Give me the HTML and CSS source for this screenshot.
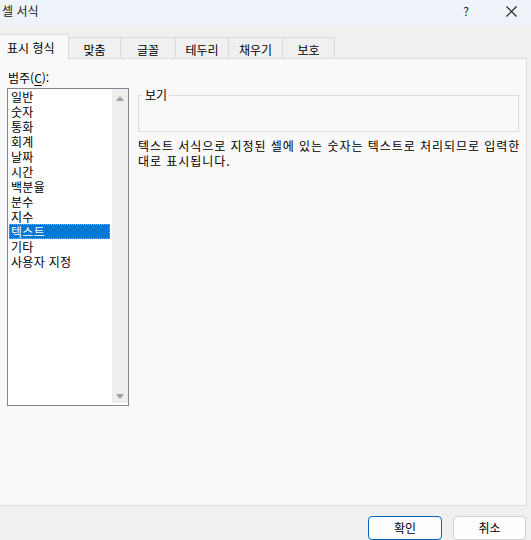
FILE: index.html
```html
<!DOCTYPE html>
<html lang="ko">
<head>
<meta charset="utf-8">
<title>셀 서식</title>
<link rel="stylesheet" href="styles.css">
</head>
<body>
<div class="dialog">
  <div class="titlebar">
    <span class="title">셀 서식</span>
    <span class="help">?</span>
    <span class="close"><svg width="11" height="11" viewBox="0 0 11 11"><path d="M0.5 0.5 L10.5 10.5 M10.5 0.5 L0.5 10.5" stroke="#1a1a1a" stroke-width="1.1" fill="none"/></svg></span>
  </div>
  <div class="tabs">
    <div class="tab active">표시 형식</div>
    <div class="tab">맞춤</div>
    <div class="tab">글꼴</div>
    <div class="tab">테두리</div>
    <div class="tab">채우기</div>
    <div class="tab">보호</div>
  </div>
  <div class="panel">
    <div class="left">
      <div class="label">범주(<u>C</u>):</div>
      <div class="listbox">
        <ul class="items">
          <li>일반</li>
          <li>숫자</li>
          <li>통화</li>
          <li>회계</li>
          <li>날짜</li>
          <li>시간</li>
          <li>백분율</li>
          <li>분수</li>
          <li>지수</li>
          <li class="selected">텍스트</li>
          <li>기타</li>
          <li>사용자 지정</li>
        </ul>
        <div class="scrollbar">
          <span class="arrow up"></span>
          <span class="arrow down"></span>
        </div>
      </div>
    </div>
    <div class="right">
      <div class="group"><span class="legend">보기</span></div>
      <p class="desc">텍스트 서식으로 지정된 셀에 있는 숫자는 텍스트로 처리되므로 입력한<br>대로 표시됩니다.</p>
    </div>
  </div>
  <div class="footer">
    <button class="btn default">확인</button>
    <button class="btn">취소</button>
  </div>
</div>
</body>
</html>
```

FILE: styles.css
```css
html, body {
  margin: 0;
  padding: 0;
}
body {
  width: 531px;
  height: 540px;
  overflow: hidden;
  background: #f0f0f0;
  font-family: "Noto Sans CJK KR", "Noto Sans", sans-serif;
  font-size: 12px;
  color: #000;
}
.dialog {
  display: flex;
  flex-direction: column;
  height: 540px;
}
.titlebar {
  height: 25px;
  background: #eef2f9;
  display: flex;
  align-items: center;
  padding-left: 2px;
}
.title {
  flex: 1;
  line-height: 22px;
  height: 25px;
  color: #1a1a1a;
}
.help {
  line-height: 22px;
  height: 25px;
  margin-right: 37px;
  color: #1a1a1a;
}
.close {
  display: flex;
  margin-right: 14px;
  margin-top: -3px;
}
.tabs {
  margin-top: 9px;
  height: 24px;
  display: grid;
  grid-template-columns: 69px 52px 55px 53px 54px 52px;
  align-items: end;
  position: relative;
  z-index: 1;
}
.tab {
  height: 21px;
  box-sizing: border-box;
  border: 1px solid #dadada;
  border-bottom: none;
  border-left: none;
  background: #f0f0f0;
  text-align: center;
  line-height: 21px;
  padding-top: 1px;
}
.tab.active {
  height: 25px;
  margin-bottom: -1px;
  background: #f9f9f9;
  border-left: none;
  line-height: 22px;
  padding-top: 2px;
  text-align: left;
  padding-left: 7px;
}
.panel {
  height: 448px;
  width: 527px;
  box-sizing: border-box;
  border: 1px solid #dcdcdc;
  border-left: none;
  background: #f9f9f9;
  display: flex;
  gap: 9px;
  padding-left: 7px;
}
.left {
  width: 122px;
  display: flex;
  flex-direction: column;
}
.label {
  margin-top: 11px;
  padding-left: 1px;
  line-height: 16px;
  height: 18px;
}
.label u {
  text-underline-offset: 2px;
}
.listbox {
  height: 318px;
  box-sizing: border-box;
  border: 1px solid #83848c;
  background: #fff;
  display: flex;
}
.items {
  list-style: none;
  margin: 0;
  padding: 0;
  width: 103px;
}
.items li {
  height: 15px;
  line-height: 15px;
  margin: 0 1px;
  padding-left: 2px;
  white-space: nowrap;
  letter-spacing: 0.3px;
}
.items li.selected {
  background: #0078d7;
  color: #fff;
  outline: 1px dotted #f09a3a;
  outline-offset: -1px;
}
.scrollbar {
  width: 16px;
  margin-left: 1px;
  margin-bottom: 2px;
  background: #eeeeee;
  display: flex;
  flex-direction: column;
  justify-content: space-between;
  align-items: center;
  padding: 7px 0 4px;
}
.arrow {
  width: 0;
  height: 0;
  border-left: 4px solid transparent;
  border-right: 4px solid transparent;
}
.arrow.up {
  border-bottom: 5px solid #a2a2a2;
}
.arrow.down {
  border-top: 5px solid #a2a2a2;
}
.right {
  width: 381px;
  display: flex;
  flex-direction: column;
}
.group {
  position: relative;
  margin-top: 36px;
  height: 37px;
  box-sizing: border-box;
  border: 1px solid #dcdcdc;
}
.legend {
  position: absolute;
  left: 4px;
  top: -9px;
  line-height: 15px;
  padding: 0 2px;
  background: #f9f9f9;
}
.desc {
  margin: 6px 0 0;
  line-height: 15px;
  white-space: nowrap;
  letter-spacing: 0.95px;
}
.footer {
  display: flex;
  justify-content: flex-end;
  gap: 11px;
  padding-right: 5px;
  margin-top: 10px;
}
.btn {
  width: 73px;
  height: 24px;
  box-sizing: border-box;
  border: 1px solid #d0d0d0;
  border-radius: 4px;
  background: #fdfdfd;
  font-family: inherit;
  font-size: 12px;
  color: #000;
  padding: 0;
  line-height: 22px;
}
.btn.default {
  width: 74px;
  border-color: #0067c0;
}
```
